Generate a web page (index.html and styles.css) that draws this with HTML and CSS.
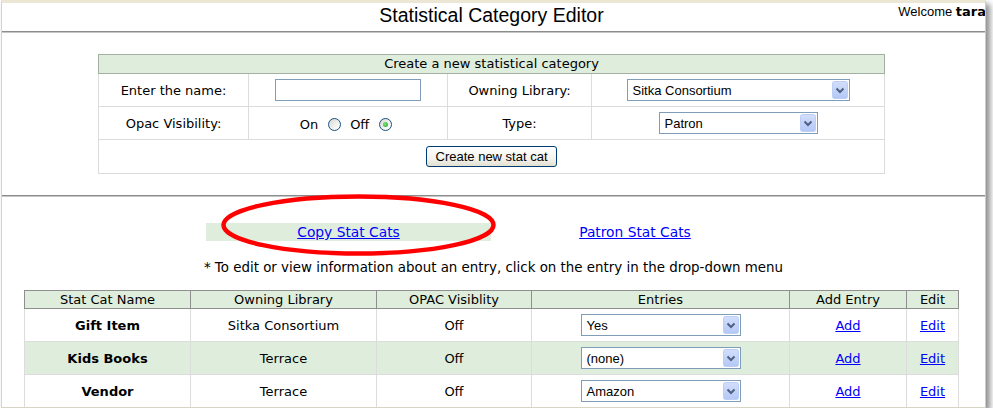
FILE: index.html
```html
<!DOCTYPE html>
<html>
<head>
<meta charset="utf-8">
<title>Statistical Category Editor</title>
<link rel="stylesheet" href="styles.css">
</head>
<body>
<div class="window">
  <div class="header">
    <div class="spacer"></div>
    <div class="title">Statistical Category Editor</div>
    <div class="welcome">Welcome <b>tara</b></div>
  </div>
  <div class="rule"></div>

  <table class="create">
    <colgroup><col class="c1"><col class="c2"><col class="c3"><col class="c4"></colgroup>
    <tr><th colspan="4">Create a new statistical category</th></tr>
    <tr>
      <td>Enter the name:</td>
      <td><span class="textbox"></span></td>
      <td>Owning Library:</td>
      <td class="selcell"><span class="select lib"><span class="sel-text">Sitka Consortium</span><span class="sel-btn"><svg width="16" height="18" viewBox="0 0 16 18"><defs><linearGradient id="g1" x1="0" y1="0" x2="0" y2="1"><stop offset="0" stop-color="#d2defb"/><stop offset="1" stop-color="#b4c8f6"/></linearGradient></defs><rect x="0.5" y="0.5" width="15" height="17" rx="2" fill="url(#g1)" stroke="#bccdf6"/><path d="M4.5 7.5 L8 11 L11.5 7.5" fill="none" stroke="#4d6185" stroke-width="2"/></svg></span></span></td>
    </tr>
    <tr>
      <td>Opac Visibility:</td>
      <td><span class="radios">On <span class="radio"></span> Off <span class="radio checked"></span></span></td>
      <td>Type:</td>
      <td class="selcell"><span class="select type"><span class="sel-text">Patron</span><span class="sel-btn"><svg width="16" height="18" viewBox="0 0 16 18"><defs><linearGradient id="g2" x1="0" y1="0" x2="0" y2="1"><stop offset="0" stop-color="#d2defb"/><stop offset="1" stop-color="#b4c8f6"/></linearGradient></defs><rect x="0.5" y="0.5" width="15" height="17" rx="2" fill="url(#g2)" stroke="#bccdf6"/><path d="M4.5 7.5 L8 11 L11.5 7.5" fill="none" stroke="#4d6185" stroke-width="2"/></svg></span></span></td>
    </tr>
    <tr>
      <td colspan="4" class="btncell"><span class="button">Create new stat cat</span></td>
    </tr>
  </table>

  <div class="rule second"></div>

  <table class="links">
    <tr>
      <td class="copy"><a href="#">Copy Stat Cats</a></td>
      <td><a href="#">Patron Stat Cats</a></td>
    </tr>
  </table>

  <p class="note">* To edit or view information about an entry, click on the entry in the drop-down menu</p>

  <table class="cats">
    <colgroup><col class="k1"><col class="k2"><col class="k3"><col class="k4"><col class="k5"><col class="k6"></colgroup>
    <tr>
      <th>Stat Cat Name</th><th>Owning Library</th><th>OPAC Visiblity</th><th>Entries</th><th>Add Entry</th><th>Edit</th>
    </tr>
    <tr>
      <td class="name">Gift Item</td><td>Sitka Consortium</td><td>Off</td>
      <td><span class="select entry"><span class="sel-text">Yes</span><span class="sel-btn"><svg width="16" height="18" viewBox="0 0 16 18"><defs><linearGradient id="g3" x1="0" y1="0" x2="0" y2="1"><stop offset="0" stop-color="#d2defb"/><stop offset="1" stop-color="#b4c8f6"/></linearGradient></defs><rect x="0.5" y="0.5" width="15" height="17" rx="2" fill="url(#g3)" stroke="#bccdf6"/><path d="M4.5 7.5 L8 11 L11.5 7.5" fill="none" stroke="#4d6185" stroke-width="2"/></svg></span></span></td>
      <td><a href="#">Add</a></td><td><a href="#">Edit</a></td>
    </tr>
    <tr class="alt">
      <td class="name">Kids Books</td><td>Terrace</td><td>Off</td>
      <td><span class="select entry"><span class="sel-text">(none)</span><span class="sel-btn"><svg width="16" height="18" viewBox="0 0 16 18"><defs><linearGradient id="g4" x1="0" y1="0" x2="0" y2="1"><stop offset="0" stop-color="#d2defb"/><stop offset="1" stop-color="#b4c8f6"/></linearGradient></defs><rect x="0.5" y="0.5" width="15" height="17" rx="2" fill="url(#g4)" stroke="#bccdf6"/><path d="M4.5 7.5 L8 11 L11.5 7.5" fill="none" stroke="#4d6185" stroke-width="2"/></svg></span></span></td>
      <td><a href="#">Add</a></td><td><a href="#">Edit</a></td>
    </tr>
    <tr>
      <td class="name">Vendor</td><td>Terrace</td><td>Off</td>
      <td><span class="select entry"><span class="sel-text">Amazon</span><span class="sel-btn"><svg width="16" height="18" viewBox="0 0 16 18"><defs><linearGradient id="g5" x1="0" y1="0" x2="0" y2="1"><stop offset="0" stop-color="#d2defb"/><stop offset="1" stop-color="#b4c8f6"/></linearGradient></defs><rect x="0.5" y="0.5" width="15" height="17" rx="2" fill="url(#g5)" stroke="#bccdf6"/><path d="M4.5 7.5 L8 11 L11.5 7.5" fill="none" stroke="#4d6185" stroke-width="2"/></svg></span></span></td>
      <td><a href="#">Add</a></td><td><a href="#">Edit</a></td>
    </tr>
  </table>

  <svg class="circle" width="280" height="64" viewBox="0 0 280 64"><ellipse cx="138.5" cy="31" rx="135" ry="28.5" fill="none" stroke="#ff0000" stroke-width="4.5"/></svg>
</div>
</body>
</html>
```

FILE: styles.css
```css
html, body {
  margin: 0;
  padding: 0;
  background: #ffffff;
}

body {
  font-family: "DejaVu Sans", Verdana, sans-serif;
  font-size: 13px;
  color: #000;
}

.window {
  position: relative;
  box-sizing: border-box;
  margin: 0 0 0 1px;
  width: 985px;
  height: 408px;
  border-left: 1px solid #d6d3cb;
  border-right: 1px solid #cfcbbd;
  border-top: 3px solid #ebe7d4;
  border-bottom: 1px solid #d8d4c4;
  box-shadow: 4px 4px 6px rgba(0, 0, 0, 0.45);
  overflow: hidden;
  background: #fff;
}

.header {
  display: grid;
  grid-template-columns: 1fr auto 1fr;
  height: 28px;
}

.title {
  font-family: "Liberation Sans", Arial, sans-serif;
  font-size: 19.5px;
  line-height: 24px;
  padding-top: 0;
  padding-right: 4px;
}

.welcome {
  justify-self: end;
  margin-right: -1px;
  font-family: "Liberation Sans", Arial, sans-serif;
  font-size: 13px;
  line-height: 16px;
  padding-top: 1px;
  white-space: nowrap;
}

.welcome b {
  font-family: "DejaVu Sans", Verdana, sans-serif;
  font-weight: bold;
}

.rule {
  height: 0;
  border-top: 1px solid #8c8c8c;
  border-bottom: 1px solid #c6c6c6;
}

/* create table */
.create {
  border-collapse: collapse;
  width: 786px;
  margin: 21px auto 0 96px;
  table-layout: fixed;
}

.create .c1 { width: 150px; }
.create .c2 { width: 199px; }
.create .c3 { width: 144px; }
.create .c4 { width: 293px; }

.create th {
  background: #dfeedc;
  font-weight: normal;
  height: 18px;
  padding: 0;
  border: 1px solid #a4b0a2;
  line-height: 16px;
}

.create td {
  border: 1px solid #dcdcdc;
  height: 32px;
  padding: 0;
  text-align: center;
}

.create td.btncell {
  height: 33px;
}

.textbox {
  display: inline-block;
  box-sizing: border-box;
  width: 146px;
  height: 22px;
  border: 1px solid #7f9db9;
  vertical-align: middle;
}

.radios {
  display: inline-flex;
  align-items: center;
  position: relative;
  left: -2px;
  top: 1px;
}

.radio {
  display: inline-flex;
  align-items: center;
  justify-content: center;
  box-sizing: border-box;
  width: 13px;
  height: 13px;
  border-radius: 50%;
  border: 1px solid #1c5180;
  background: linear-gradient(135deg, #d6d5cd 0%, #f4f4f1 60%, #ffffff 100%);
  margin: 0 9px 0 10px;
}

.radio.checked {
  margin-right: 0;
}

.radio.checked::after {
  content: "";
  width: 5px;
  height: 5px;
  border-radius: 50%;
  background: radial-gradient(circle at 40% 40%, #7ee37e, #21a121);
}

.select {
  display: inline-flex;
  align-items: center;
  box-sizing: border-box;
  height: 22px;
  border: 1px solid #7f9db9;
  background: #fff;
  padding: 0 1px 0 0;
  font-family: "Liberation Sans", Arial, sans-serif;
  font-size: 13px;
  vertical-align: middle;
  text-align: left;
}

.select.lib { width: 223px; }
.select.type { width: 159px; }
.select.entry { width: 160px; }

.sel-text {
  flex: 1;
  padding-left: 5px;
  white-space: nowrap;
}

.sel-btn {
  display: flex;
  width: 16px;
  height: 18px;
}

.button {
  display: inline-block;
  box-sizing: border-box;
  width: 131px;
  height: 21px;
  line-height: 19px;
  border: 1px solid #003c74;
  border-radius: 3px;
  background: linear-gradient(#ffffff 0%, #f4f3ee 60%, #e3e0d2 100%);
  font-family: "Liberation Sans", Arial, sans-serif;
  font-size: 13px;
  vertical-align: middle;
}

.second {
  margin-top: 21px;
}

/* links */
a {
  color: #0000ff;
  text-decoration: underline;
}

.links {
  border-collapse: collapse;
  width: 573px;
  margin: 26px auto 0 204px;
  table-layout: fixed;
}

.links td {
  padding: 0;
  height: 18px;
  text-align: center;
  line-height: 16px;
  font-size: 13.8px;
}

.links td.copy {
  width: 285px;
  background: #dfeedc;
}

.note {
  margin: 19px 0 0 0;
  text-align: center;
  line-height: 16px;
  font-size: 13.4px;
}

/* stat cat table */
.cats {
  border-collapse: collapse;
  width: 934px;
  margin: 14px 0 0 22px;
  table-layout: fixed;
}

.cats .k1 { width: 166px; }
.cats .k2 { width: 186px; }
.cats .k3 { width: 155px; }
.cats .k4 { width: 258px; }
.cats .k5 { width: 117px; }
.cats .k6 { width: 52px; }

.cats th {
  background: #dfeedc;
  font-weight: normal;
  border: 1px solid #8f8f8f;
  height: 17px;
  padding: 0;
  line-height: 16px;
}

.cats td {
  border: 1px solid #dcdcdc;
  height: 32px;
  padding: 0;
  text-align: center;
}

.cats tr.alt td {
  background: #dfeedc;
}

.cats td.name {
  font-weight: bold;
}

.circle {
  position: absolute;
  left: 218px;
  top: 191px;
}
```
